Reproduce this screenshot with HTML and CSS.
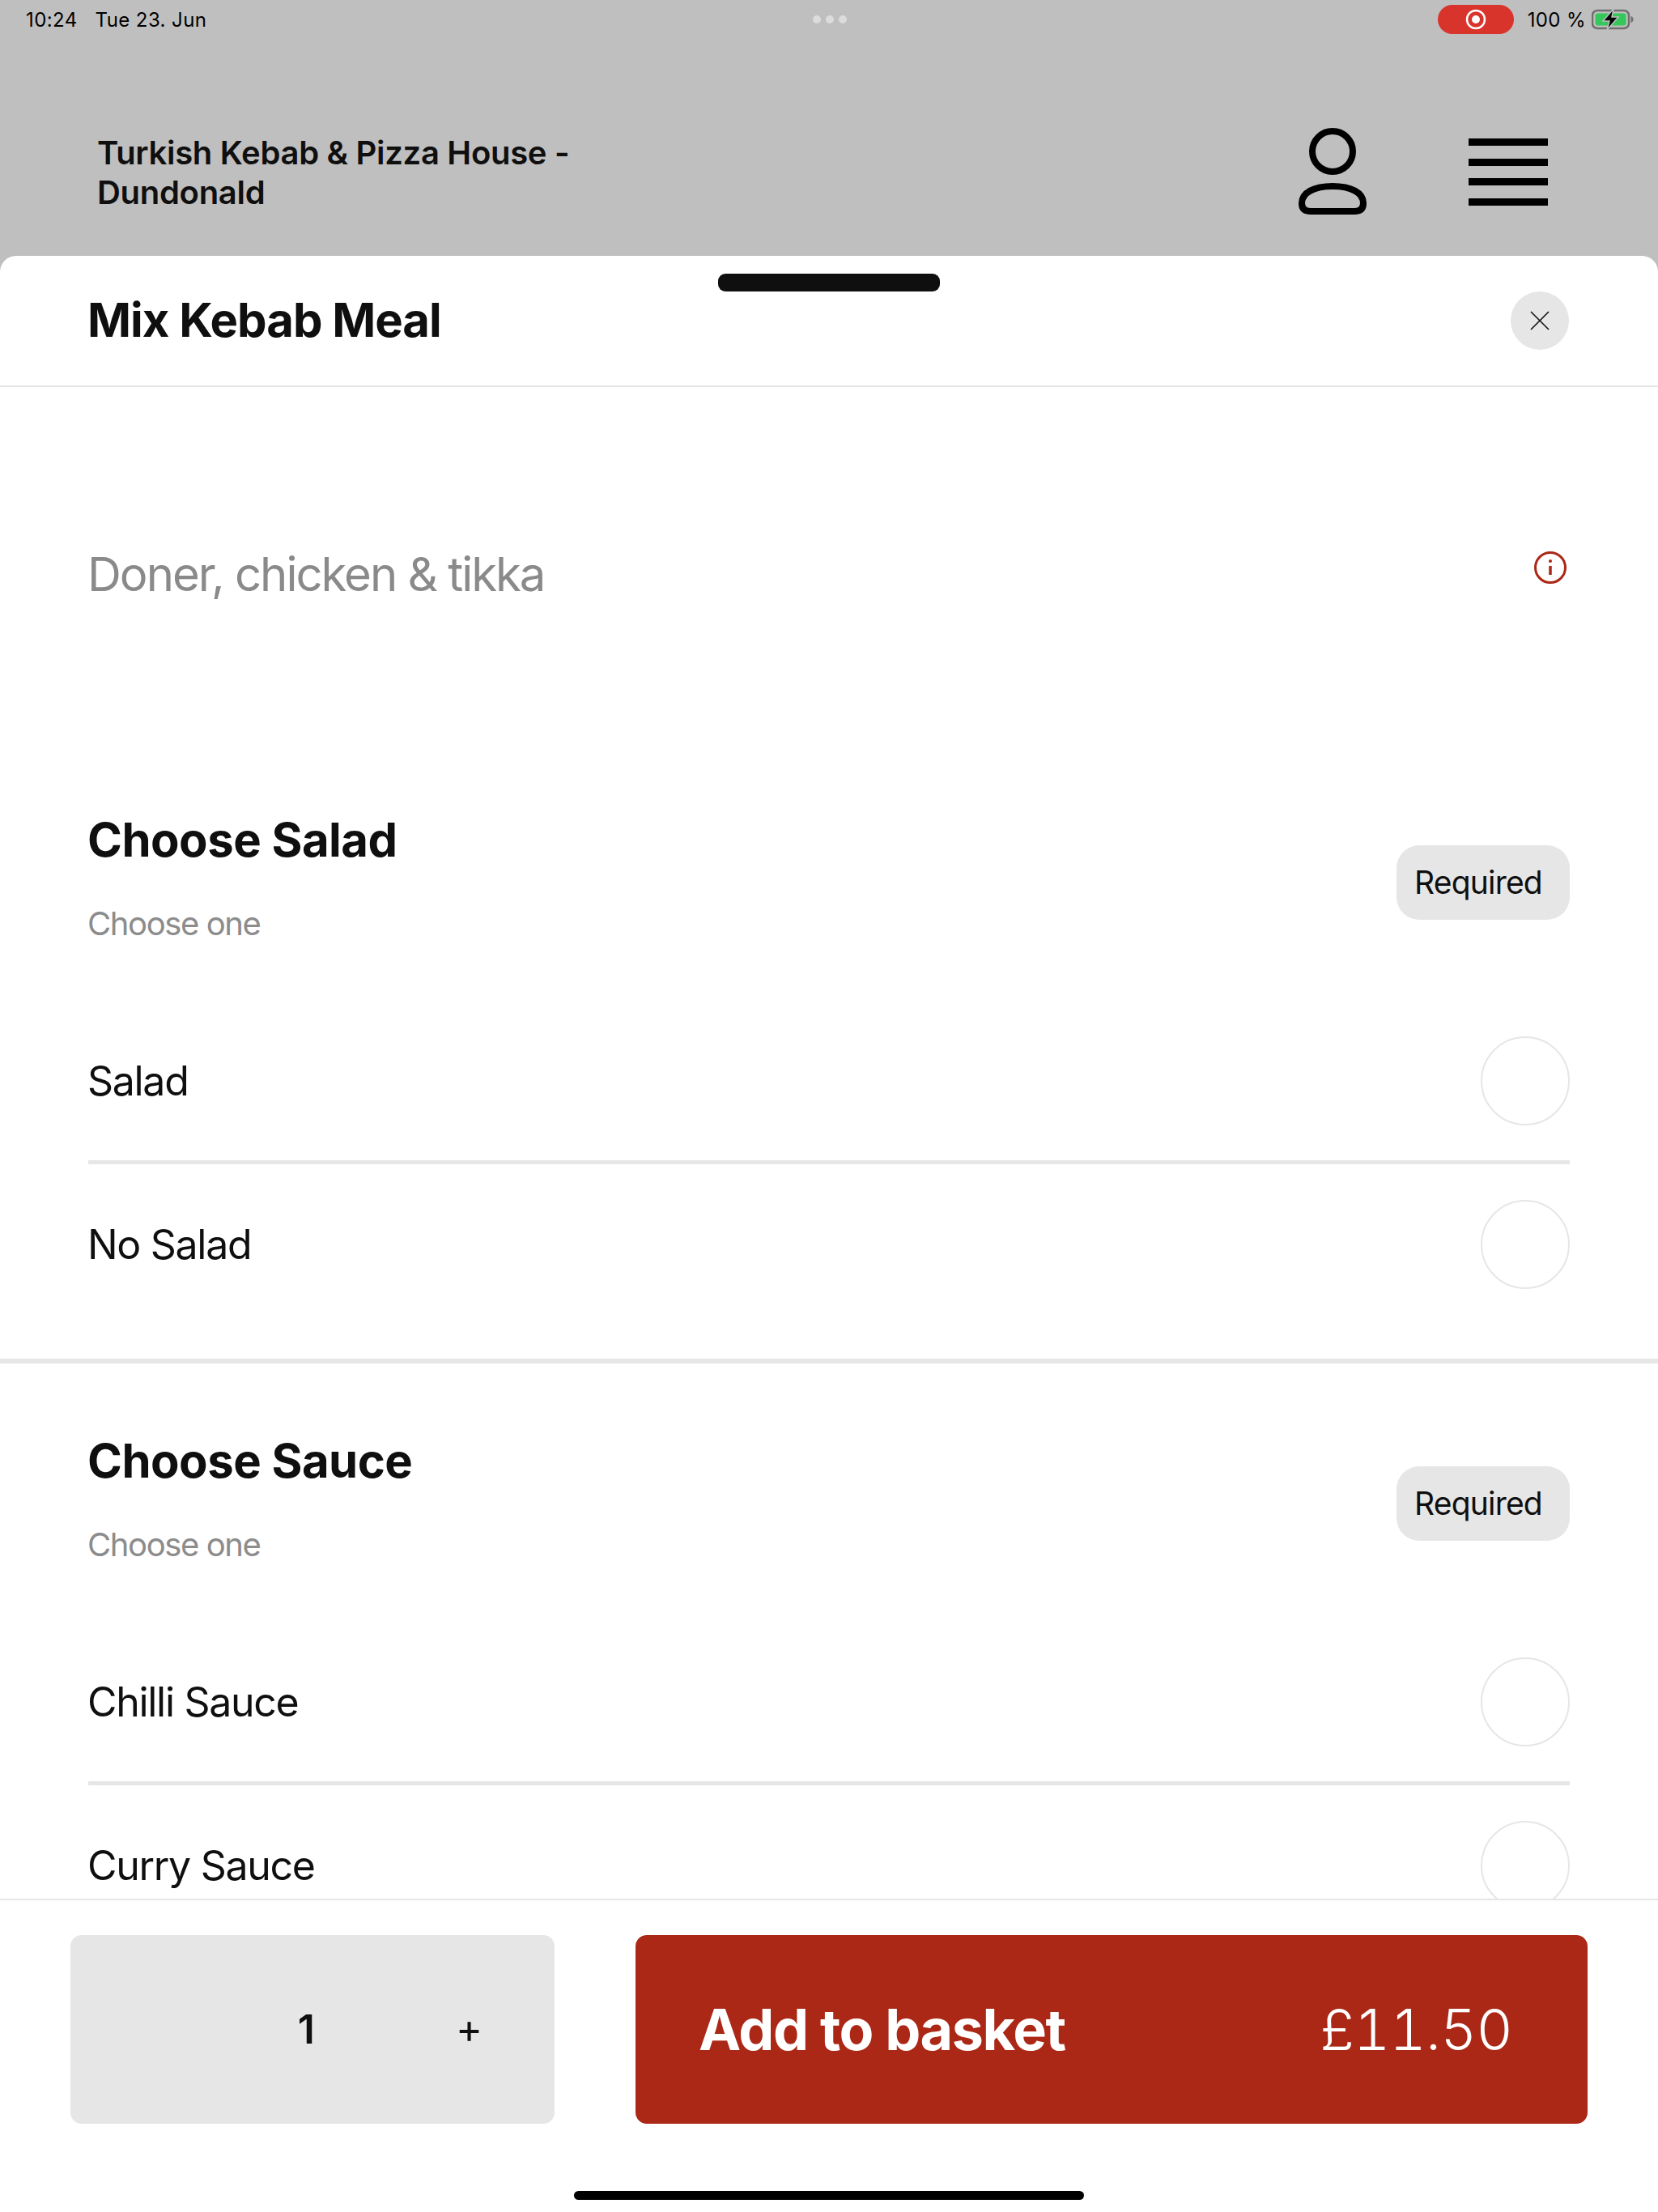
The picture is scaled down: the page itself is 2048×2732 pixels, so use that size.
FILE: index.html
```html
<!DOCTYPE html>
<html lang="en">
<head>
<meta charset="utf-8">
<title>Mix Kebab Meal</title>
<link rel="stylesheet" href="styles.css">
</head>
<body>
<div class="screen">
  <div class="status">
    <div class="status-left"><span>10:24</span><span>Tue 23. Jun</span></div>
    <div class="status-dots"><i></i><i></i><i></i></div>
    <div class="status-right">
      <div class="rec">
        <svg width="28" height="28" viewBox="0 0 28 28"><circle cx="14" cy="14" r="11" fill="none" stroke="#fff" stroke-width="2.5"/><circle cx="14" cy="14" r="5" fill="#fff"/></svg>
      </div>
      <span class="pct">100 %</span>
      <svg class="battery" width="52" height="26" viewBox="0 0 52 26">
        <rect x="1" y="2" width="45" height="22" rx="6" fill="none" stroke="#6f6f6f" stroke-width="2.5"/>
        <rect x="4.5" y="5.5" width="38" height="15" rx="3" fill="#34c759"/>
        <path d="M48.5 9c2 .5 3 2 3 4s-1 3.500-3 4z" fill="#6f6f6f"/>
        <path d="M27 0 14 15h8l-3 11 14-16h-8z" fill="#000" stroke="#bfbfbf" stroke-width="1.500"/>
      </svg>
    </div>
  </div>

  <header class="topbar">
    <h1 class="shop">Turkish Kebab &amp; Pizza House - Dundonald</h1>
    <div class="top-icons">
      <svg class="person" width="84" height="107" viewBox="0 0 84 107" fill="none" stroke="#000" stroke-width="8">
        <circle cx="42" cy="29" r="25"/>
        <path d="M15 103h54q11 0 11-10c0-13-15-21-38-21S4 80 4 93q0 10 11 10z"/>
      </svg>
      <div class="burger"><i></i><i></i><i></i><i></i></div>
    </div>
  </header>

  <main class="sheet">
    <div class="grabber"></div>
    <div class="sheet-head">
      <h2 class="item-name">Mix Kebab Meal</h2>
      <button class="close" type="button" aria-label="Close">
        <svg width="26" height="26" viewBox="0 0 26 26" fill="none" stroke="#111" stroke-width="1.6"><path d="M2 2l22 22M24 2 2 24"/></svg>
      </button>
    </div>

    <div class="sheet-body">
      <div class="blurb">
        <p class="blurb-text">Doner, chicken &amp; tikka</p>
        <svg class="info" width="40" height="40" viewBox="0 0 40 40" fill="none" stroke="#aa2815" stroke-width="3">
          <circle cx="20" cy="20" r="18.500"/>
          <path d="M20 18v11" stroke-width="3.500"/>
          <circle cx="20" cy="12" r="2" fill="#aa2815" stroke="none"/>
        </svg>
      </div>

      <section class="group">
        <div class="group-head">
          <div class="group-text">
            <h3 class="group-title">Choose Salad</h3>
            <p class="group-sub">Choose one</p>
          </div>
          <span class="badge">Required</span>
        </div>
        <div class="option"><span>Salad</span><i class="radio"></i></div>
        <div class="option"><span>No Salad</span><i class="radio"></i></div>
      </section>

      <section class="group">
        <div class="group-head">
          <div class="group-text">
            <h3 class="group-title">Choose Sauce</h3>
            <p class="group-sub">Choose one</p>
          </div>
          <span class="badge">Required</span>
        </div>
        <div class="option"><span>Chilli Sauce</span><i class="radio"></i></div>
        <div class="option"><span>Curry Sauce</span><i class="radio"></i></div>
      </section>
    </div>

    <footer class="footer">
      <div class="actions">
        <div class="qty"><span class="qty-num">1</span><span class="qty-plus">+</span></div>
        <button class="add" type="button"><span class="add-label">Add to basket</span><span class="add-price">£11.50</span></button>
      </div>
      <div class="home-bar"></div>
    </footer>
  </main>
</div>
</body>
</html>
```
FILE: styles.css
```css
* { box-sizing: border-box; }

html, body {
  margin: 0;
  padding: 0;
}

body {
  font-family: Inter, "Liberation Sans", sans-serif;
  color: #0f0f0f;
  background: #bfbfbf;
}

.screen {
  width: 2048px;
  height: 2732px;
  display: flex;
  flex-direction: column;
  overflow: hidden;
  background: #bfbfbf;
}

/* Device status bar */
.status {
  height: 48px;
  flex: none;
  display: grid;
  grid-template-columns: 1fr auto 1fr;
  align-items: center;
  padding: 0 30px 0 32px;
  font-size: 24px;
  letter-spacing: 0.4px;
  color: #000;
}

.status-left {
  display: flex;
  gap: 22px;
}

.status-dots {
  display: flex;
  gap: 6px;
}

.status-dots i {
  width: 10px;
  height: 10px;
  border-radius: 50%;
  background: #dcdcdc;
}

.status-right {
  display: flex;
  align-items: center;
  justify-content: flex-end;
}

.rec {
  width: 94px;
  height: 36px;
  border-radius: 18px;
  background: #d9342b;
  display: flex;
  align-items: center;
  justify-content: center;
  margin-right: 17px;
}

.pct {
  margin-right: 7px;
}

/* Restaurant bar */
.topbar {
  height: 268px;
  flex: none;
  display: flex;
  align-items: flex-start;
  justify-content: space-between;
  padding: 0 136px 0 120px;
}

.shop {
  margin: 116px 0 0;
  width: 640px;
  font-size: 40px;
  line-height: 49px;
  font-weight: 600;
  letter-spacing: -0.3px;
}

.top-icons {
  display: flex;
  align-items: flex-start;
  gap: 126px;
  padding-top: 110px;
}

.burger {
  width: 98px;
  display: flex;
  flex-direction: column;
  gap: 15.500px;
  padding-top: 13px;
}

.burger i {
  display: block;
  height: 9px;
  background: #000;
}

/* Item sheet */
.sheet {
  position: relative;
  flex: 1;
  min-height: 0;
  display: flex;
  flex-direction: column;
  background: #fff;
  border-radius: 20px 20px 0 0;
}

.grabber {
  position: absolute;
  top: 22px;
  left: 887px;
  width: 274px;
  height: 22px;
  border-radius: 9px;
  background: #0f0f0f;
}

.sheet-head {
  height: 162px;
  flex: none;
  display: flex;
  align-items: center;
  justify-content: space-between;
  padding: 0 110px 0 109px;
  border-bottom: 2px solid #e6e6e6;
}

.item-name {
  margin: 0 0 2px -1px;
  font-size: 58px;
  font-weight: 700;
  letter-spacing: -1px;
}

.close {
  width: 72px;
  height: 72px;
  border: 0;
  padding: 0;
  border-radius: 50%;
  background: #e6e6e6;
  display: flex;
  align-items: center;
  justify-content: center;
}

.sheet-body {
  flex: 1;
  min-height: 0;
  overflow: hidden;
}

.blurb {
  height: 439px;
  display: flex;
  align-items: flex-start;
  justify-content: space-between;
  padding: 186px 113px 0 108px;
}

.blurb-text {
  margin: 0;
  font-size: 58px;
  line-height: 90px;
  color: #8a8a8a;
  letter-spacing: -2px;
}

.info {
  margin-top: 17px;
}

.group {
  height: 767px;
  padding: 0 109px;
  border-bottom: 6px solid #e6e6e6;
}

.group-head {
  height: 319px;
  display: flex;
  align-items: center;
  justify-content: space-between;
  padding-top: 26px;
}

.group-text {
  margin: 0 0 10px -1px;
}

.group-title {
  margin: 0;
  font-size: 58px;
  line-height: 70px;
  font-weight: 700;
  letter-spacing: -0.5px;
}

.group-sub {
  margin: 43px 0 0;
  font-size: 40px;
  line-height: 52px;
  color: #8c8c8c;
  letter-spacing: -1.4px;
}

.badge {
  width: 214px;
  height: 92px;
  border-radius: 28px;
  background: #e6e6e6;
  font-size: 39px;
  line-height: 92px;
  padding-left: 22px;
  color: #0f0f0f;
  letter-spacing: -0.8px;
}

.option {
  height: 202px;
  display: flex;
  align-items: center;
  justify-content: space-between;
  font-size: 50px;
  letter-spacing: -1.3px;
  border-bottom: 5px solid #e6e6e6;
}

.option > span {
  margin-left: -1px;
}

.option:last-child {
  height: 198px;
  border-bottom: 0;
}

.radio {
  width: 110px;
  height: 110px;
  border-radius: 50%;
  border: 2px solid #e6e6e6;
}

/* Bottom action bar */
.footer {
  height: 387px;
  flex: none;
  background: #fff;
  border-top: 2px solid #e6e6e6;
  padding: 43px 87px 0;
}

.actions {
  height: 233px;
  display: flex;
  gap: 100px;
}

.qty {
  width: 598px;
  flex: none;
  display: flex;
  align-items: center;
  justify-content: flex-end;
  padding-right: 89px;
  gap: 174px;
  background: #e6e6e6;
  border-radius: 14px;
}

.qty-num {
  font-size: 50px;
  font-weight: 600;
  padding-bottom: 2px;
}

.qty-plus {
  font-size: 50px;
  padding-bottom: 3px;
}

.add {
  flex: 1;
  border: 0;
  border-radius: 14px;
  background: #aa2815;
  color: #fff;
  font-family: inherit;
  display: flex;
  align-items: center;
  justify-content: space-between;
  padding: 0 93px 0 78px;
}

.add-label {
  font-size: 70px;
  font-weight: 700;
  letter-spacing: -1.4px;
}

.add-price {
  font-size: 70px;
  font-weight: 300;
  letter-spacing: -0.8px;
  font-variant-numeric: tabular-nums;
}

.home-bar {
  width: 630px;
  height: 11px;
  margin: 83px auto 0;
  border-radius: 6px;
  background: #000;
}
```
